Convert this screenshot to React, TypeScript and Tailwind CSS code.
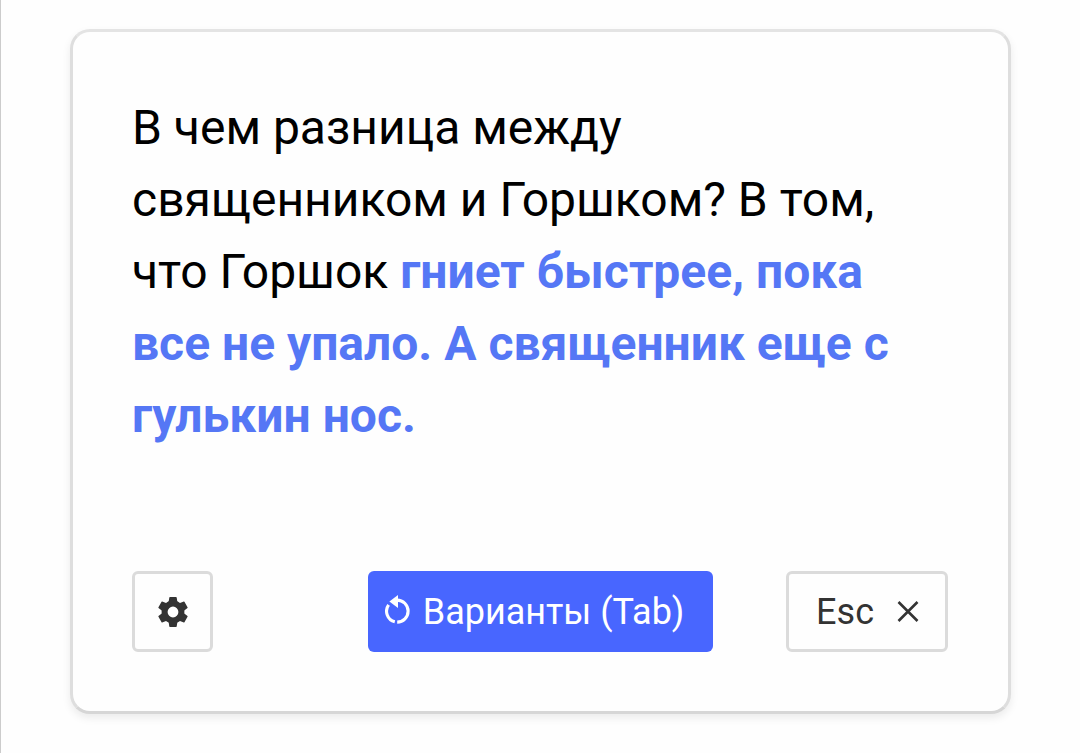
import React from "react";

function GearIcon() {
  return (
    <svg viewBox="-15 -15 30 30" className="h-[30px] w-[30px]" fill="#333333" aria-hidden="true">
      <circle r="8.4" fill="none" stroke="#333333" strokeWidth="6" />
      {[0, 60, 120, 180, 240, 300].map((angle) => (
        <path
          key={angle}
          d="M-3.7 -14.6Q-3.6 -15 -3.1 -15H3.1Q3.6 -15 3.7 -14.6L4.6 -8.5H-4.6Z"
          transform={`rotate(${angle})`}
        />
      ))}
    </svg>
  );
}

function RotateIcon() {
  return (
    <svg viewBox="0 0 26 30" className="h-[30px] w-[26px]" fill="none" aria-hidden="true">
      <path d="M3.6 9.8A11 11 0 0 0 9.8 26.8" stroke="white" strokeWidth="3.1" />
      <path d="M12 5.1A11 11 0 1 1 12.2 27.1" stroke="white" strokeWidth="3.1" />
      <path d="M4.4 6.6L13 0V13Z" fill="white" />
    </svg>
  );
}

function CloseIcon() {
  return (
    <svg viewBox="0 0 22 22" className="h-[22px] w-[22px]" fill="none" aria-hidden="true">
      <path d="M1.5 1L20.5 20M20.5 1L1.5 20" stroke="#333333" strokeWidth="2.6" />
    </svg>
  );
}

export default function App() {
  return (
    <main className="min-h-screen border-l border-[#cccccc] bg-[#fefefe] pt-[29px] pr-[69px] pb-[38px] pl-[69px] font-['Roboto',sans-serif]">
      <section className="rounded-[20px] border-[3px] border-[#dedede] border-t-[#e4e4e4] border-b-[#d6d6d6] bg-[#fefefe] pt-[60px] pr-[60px] pb-[59px] pl-[59px] shadow-[0_4px_8px_rgba(0,0,0,0.08)]">
        <p className="text-[48px] leading-[72px] text-black">
          В чем разница между священником и Горшком? В том, что Горшок{" "}
          <strong className="font-bold text-[#5577f5]">
            гниет быстрее, пока все не упало. А священник еще с гулькин нос.
          </strong>
        </p>
        <div className="mt-[119px] flex items-center justify-between text-[36px] leading-[42px]">
          <button
            type="button"
            aria-label="Настройки"
            className="flex h-[81px] w-[81px] items-center justify-center rounded-[6px] border-[3px] border-[#dbdbdb]"
          >
            <GearIcon />
          </button>
          <button
            type="button"
            className="ml-[82px] flex h-[81px] items-center gap-3 rounded-[6px] bg-[#4866ff] pr-[29px] pl-[17px] text-white"
          >
            <span className="pb-1">
              <RotateIcon />
            </span>
            Варианты (Tab)
          </button>
          <button
            type="button"
            className="flex h-[81px] items-center gap-[23px] rounded-[6px] border-[3px] border-[#dbdbdb] pr-[26px] pl-[27px] text-[#333333]"
          >
            Esc
            <CloseIcon />
          </button>
        </div>
      </section>
    </main>
  );
}
